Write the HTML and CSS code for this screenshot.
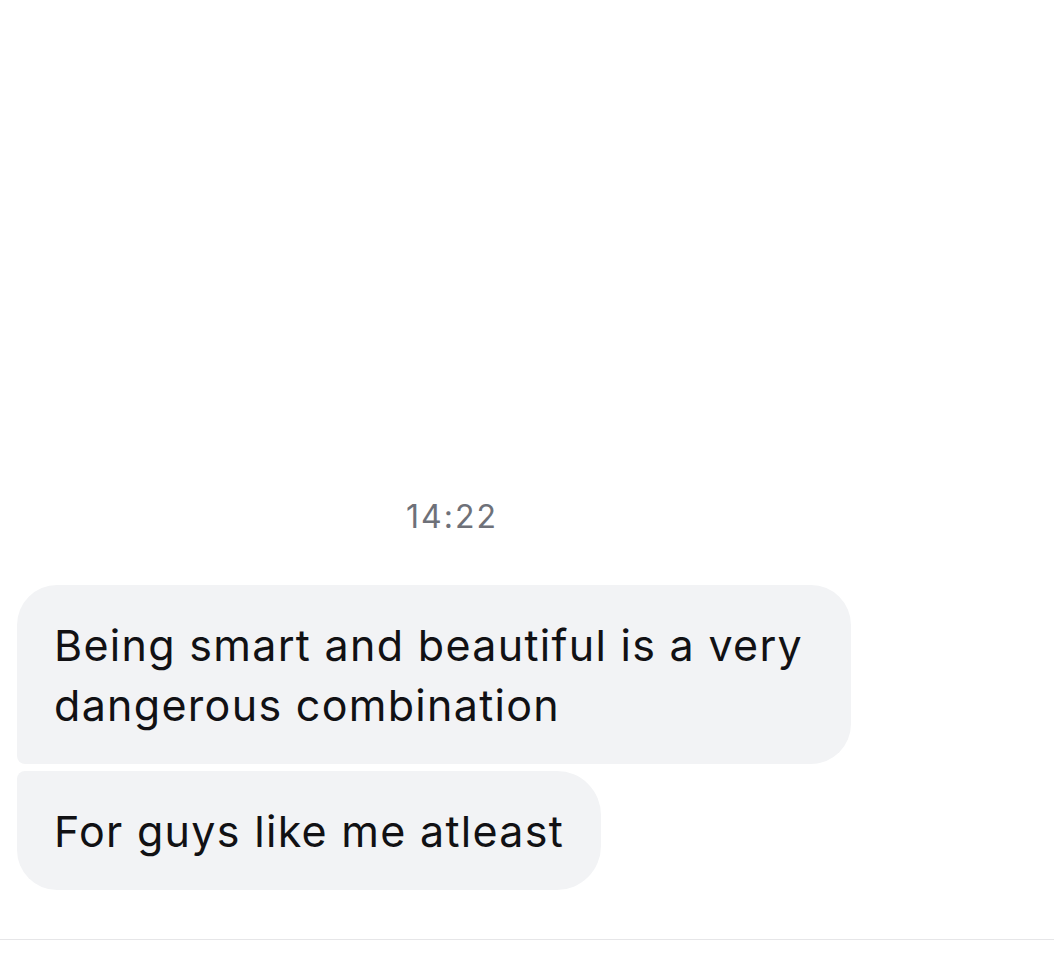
FILE: index.html
```html
<!DOCTYPE html>
<html>
<head>
<meta charset="utf-8">
<link rel="stylesheet" href="styles.css">
</head>
<body>
<div class="screen">
  <div class="messages">
    <div class="time">14:22</div>
    <div class="bubble first">Being smart and beautiful is a very dangerous combination</div>
    <div class="bubble last">For guys like me atleast</div>
  </div>
  <div class="composer"></div>
</div>
</body>
</html>
```
FILE: styles.css
```css
html, body {
  margin: 0;
  padding: 0;
  background: #ffffff;
}
.screen {
  height: 963px;
  display: flex;
  flex-direction: column;
  font-family: Inter, "Noto Sans", sans-serif;
}
.messages {
  flex: 1;
  display: flex;
  flex-direction: column;
  justify-content: flex-end;
  align-items: flex-start;
  padding: 0 0 49px 17px;
}
.time {
  width: 870px;
  text-align: center;
  font-size: 32px;
  letter-spacing: 2px;
  line-height: 40px;
  color: #6e7179;
  margin-bottom: 48px;
}
.bubble {
  box-sizing: border-box;
  max-width: 834px;
  background: #f2f3f5;
  color: #111114;
  font-size: 43px;
  letter-spacing: 1.3px;
  line-height: 60px;
  padding: 30px 37px 29px 37px;
}
.bubble.first {
  border-radius: 40px 40px 40px 8px;
  margin-bottom: 7px;
}
.bubble.last {
  border-radius: 8px 44px 44px 40px;
}
.composer {
  height: 23px;
  border-top: 1px solid #e6e6e8;
}
```
